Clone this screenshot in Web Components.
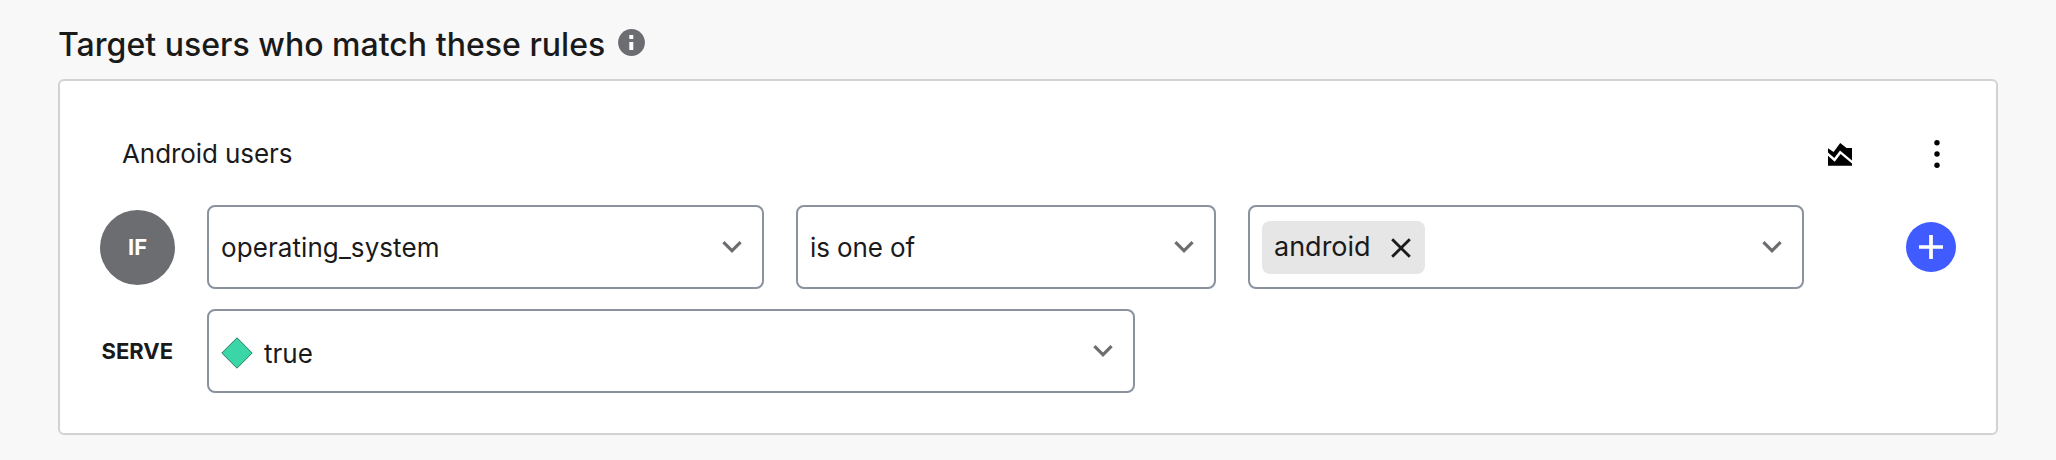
<!DOCTYPE html>
<html lang="en">
<head>
<meta charset="utf-8">
<title>Targeting rules</title>
<style>
body { margin: 0; background: #f8f8f8; font-family: Inter, sans-serif; color: #1a1a1b; }
</style>
</head>
<body>
<targeting-section>
  <span slot="title">Target users who match these rules</span>
  <rule-card>
    <span slot="name">Android users</span>
    <rule-select slot="if" class="attribute">operating_system</rule-select>
    <rule-select slot="if" class="operator">is one of</rule-select>
    <rule-select slot="if" class="values"><value-tag>android</value-tag></rule-select>
    <rule-select slot="serve" class="variation"><variation-mark></variation-mark>true</rule-select>
  </rule-card>
</targeting-section>
<script>
function define(name, html) {
  const template = document.createElement('template');
  template.innerHTML = html;
  customElements.define(name, class extends HTMLElement {
    constructor() {
      super();
      this.attachShadow({ mode: 'open' }).append(template.content.cloneNode(true));
    }
  });
}

define('info-icon', `
  <style>:host{display:block;width:27px;height:27px} svg{display:block}</style>
  <svg width="27" height="27" viewBox="0 0 27 27"><circle cx="13.5" cy="13.5" r="13.4" fill="#6c6d71"/><path d="M11.3 6h4v4h-4zM11.3 13h4v8h-4z" fill="#fff"/></svg>`);

define('area-icon', `
  <style>:host{display:block;width:24px;height:24px} svg{display:block}</style>
  <svg width="24" height="24" viewBox="0 0 24 24"><path fill="#000" d="M0 5.2 5.6 9 12.2 0 18.5 5H24V17.6L12 7.6 6.3 14.9 0 9.6zM0 12.7 6.7 18.8 12.6 11.1 24 20.4V22.8H0z"/></svg>`);

define('more-icon', `
  <style>:host{display:block;width:6px;height:28px} svg{display:block}</style>
  <svg width="6" height="28" viewBox="0 0 6 28"><circle cx="3" cy="2.8" r="2.7"/><circle cx="3" cy="14" r="2.7"/><circle cx="3" cy="25.2" r="2.7"/></svg>`);

define('variation-mark', `
  <style>:host{display:block;width:32px;height:32px;margin-right:11px;flex:none} svg{display:block}</style>
  <svg width="32" height="32" viewBox="0 0 32 32"><path d="M16 .8 31.2 16 16 31.2 .8 16z" fill="#3ad6a8" stroke="#287b63" stroke-width="1"/></svg>`);

define('value-tag', `
  <style>
    :host{display:flex;box-sizing:border-box;width:163px;height:53px;padding:0 14px 0 12px;align-items:center;justify-content:space-between;background:#e6e6e6;border-radius:8px;font-size:27px}
    svg{display:block}
    span{line-height:51px;height:53px}
  </style>
  <span><slot></slot></span>
  <svg width="20" height="20" viewBox="0 0 20 20"><path d="M1.2 1.2 18.8 18.8M18.8 1.2 1.2 18.8" stroke="#1a1a1b" stroke-width="2.8"/></svg>`);

define('rule-select', `
  <style>
    :host{display:flex;box-sizing:border-box;height:84px;border:2px solid #89929d;border-radius:8px;background:#fff;padding:0 20px 0 12px;align-items:center;justify-content:space-between;font-size:26px;line-height:32px}
    :host(.attribute){width:557px;letter-spacing:.08px}
    :host(.operator){width:420px;letter-spacing:-.1px}
    :host(.values){width:556px}
    :host(.variation){width:928px;line-height:34px}
    div{display:flex;align-items:center;padding-top:1px}
    :host(.variation) div{padding-top:5px}
    ::slotted(variation-mark){margin-bottom:2px}
    svg{display:block}
  </style>
  <div><slot></slot></div>
  <svg width="20" height="12" viewBox="6 8.59 12 7.41"><path fill="#6c6d71" d="M16.59 8.59 12 13.17 7.41 8.59 6 10l6 6 6-6z"/></svg>`);

define('if-badge', `
  <style>:host{display:flex;width:75px;height:75px;border-radius:50%;background:#6c6d71;color:#fff;align-items:center;justify-content:center;font-size:22px;font-weight:700}</style>
  <slot></slot>`);

define('add-button', `
  <style>:host{display:block;width:50px;height:50px} svg{display:block}</style>
  <svg width="50" height="50" viewBox="0 0 50 50"><circle cx="25" cy="25" r="25" fill="#405bff"/><path d="M13 25H37M25 13V37" stroke="#fff" stroke-width="3.7"/></svg>`);

define('rule-card', `
  <style>
    :host{display:block;box-sizing:border-box;width:1940px;height:356px;border:2px solid #d2d2d2;border-radius:6px;background:#fff;padding:51px 40px 0}
    header{display:flex;height:44px;align-items:center;padding-left:22px;font-size:26px;line-height:32px;letter-spacing:-.08px}
    area-icon{margin:2px 82px 0 auto}
    more-icon{margin-right:16.5px}
    .row{display:flex;align-items:center;height:84px}
    .if{margin-top:29px}
    .serve{margin-top:20px}
    .lead{width:107px;flex:none}
    .serve .lead{font-size:22px;font-weight:700;text-indent:1.5px}
    .fields{display:flex;gap:32px}
    add-button{margin-left:102px}
  </style>
  <header><slot name="name"></slot><area-icon></area-icon><more-icon></more-icon></header>
  <div class="row if"><div class="lead"><if-badge>IF</if-badge></div><div class="fields"><slot name="if"></slot></div><add-button></add-button></div>
  <div class="row serve"><div class="lead">SERVE</div><slot name="serve"></slot></div>`);

define('targeting-section', `
  <style>
    :host{display:block;padding:24px 58px 0}
    h2{display:flex;margin:0;height:55px;align-items:flex-start;gap:13px;font-size:32px;line-height:42px;font-weight:500;letter-spacing:.03px}
    info-icon{margin-top:5px}
  </style>
  <h2><slot name="title"></slot><info-icon></info-icon></h2>
  <slot></slot>`);
</script>
</body>
</html>
